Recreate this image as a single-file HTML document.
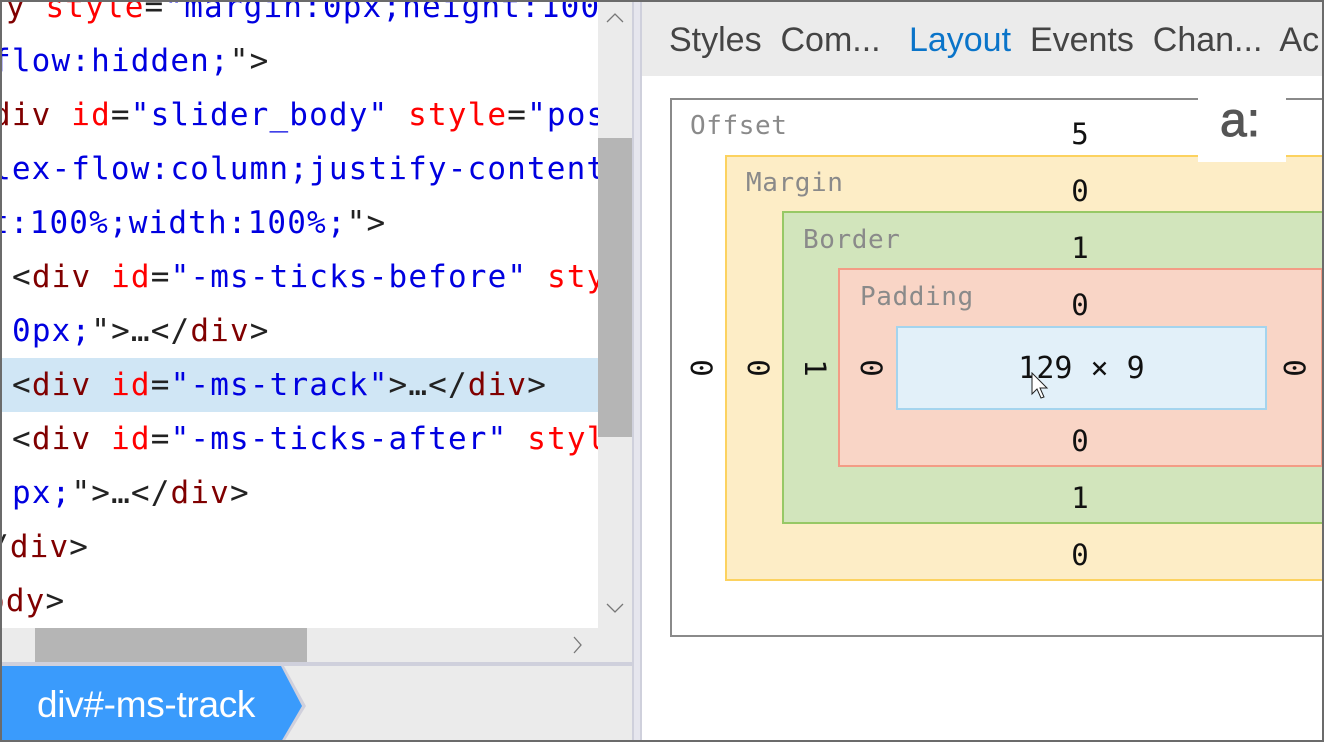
<!DOCTYPE html>
<html><head><meta charset="utf-8"><style>
*{margin:0;padding:0;box-sizing:border-box}
body{width:1324px;height:742px;overflow:hidden;background:#fff;position:relative;font-family:"Liberation Sans",sans-serif}
.abs{position:absolute}
#code{left:0;top:0;width:598px;height:628px;overflow:hidden;background:#fff;font-family:"DejaVu Sans Mono","Liberation Mono",monospace;font-size:31px;letter-spacing:1.15px;white-space:pre}
.ln{position:absolute;left:0;height:54px;line-height:54px}
.t{color:#800000}.a{color:#f00}.v{color:#0000e0}.p{color:#222}
.mono{font-family:"DejaVu Sans Mono","Liberation Mono",monospace}
.lab{position:absolute;color:#8a8a8a;font-size:26px;letter-spacing:0.6px}
.num{position:absolute;font-size:29px;color:#111;width:40px;text-align:center;margin-left:-20px}
.rot{transform:rotate(90deg)}
</style></head><body>
<div id="code" class="abs">
<div class="ln" style="top:-20px;left:-14px"><span class="t">dy</span> <span class="a">style</span><span class="p">=</span><span class="v">"margin:0px;height:100</span></div>
<div class="ln" style="top:34px;left:-8px"><span class="v">flow:hidden;</span><span class="p">"&gt;</span></div>
<div class="ln" style="top:88px;left:-8px"><span class="t">div</span> <span class="a">id</span><span class="p">=</span><span class="v">"slider_body"</span> <span class="a">style</span><span class="p">=</span><span class="v">"pos</span></div>
<div class="ln" style="top:142px;left:-8px"><span class="v">lex-flow:column;justify-content</span></div>
<div class="ln" style="top:196px;left:-10px"><span class="v">t:100%;width:100%;</span><span class="p">"&gt;</span></div>
<div class="ln" style="top:250px;left:12px"><span class="p">&lt;</span><span class="t">div</span> <span class="a">id</span><span class="p">=</span><span class="v">"-ms-ticks-before"</span> <span class="a">sty</span></div>
<div class="ln" style="top:304px;left:12px"><span class="v">0px;</span><span class="p">"&gt;…&lt;/</span><span class="t">div</span><span class="p">&gt;</span></div>
<div class="ln" style="top:358px;left:0;width:598px;background:#d0e6f5"></div>
<div class="ln" style="top:358px;left:12px"><span class="p">&lt;</span><span class="t">div</span> <span class="a">id</span><span class="p">=</span><span class="v">"-ms-track"</span><span class="p">&gt;…&lt;/</span><span class="t">div</span><span class="p">&gt;</span></div>
<div class="ln" style="top:412px;left:12px"><span class="p">&lt;</span><span class="t">div</span> <span class="a">id</span><span class="p">=</span><span class="v">"-ms-ticks-after"</span> <span class="a">styl</span></div>
<div class="ln" style="top:466px;left:12px"><span class="v">px;</span><span class="p">"&gt;…&lt;/</span><span class="t">div</span><span class="p">&gt;</span></div>
<div class="ln" style="top:520px;left:-10px"><span class="p">/</span><span class="t">div</span><span class="p">&gt;</span></div>
<div class="ln" style="top:574px;left:-14px"><span class="t">ody</span><span class="p">&gt;</span></div>
</div>
<div class="abs" style="left:598px;top:0;width:34px;height:628px;background:#ebebeb"></div>
<div class="abs" style="left:598px;top:138px;width:34px;height:299px;background:#b5b5b5"></div>
<svg class="abs" style="left:598px;top:0" width="34" height="628"><path d="M9 22 L17 14 L25 22" fill="none" stroke="#777" stroke-width="1.3"/><path d="M9 604 L17 612 L25 604" fill="none" stroke="#777" stroke-width="1.3"/></svg>
<div class="abs" style="left:0;top:628px;width:632px;height:34px;background:#ebebeb"></div>
<div class="abs" style="left:35px;top:628px;width:272px;height:34px;background:#b5b5b5"></div>
<svg class="abs" style="left:560px;top:628px" width="30" height="34"><path d="M14 9 L21 17 L14 25" fill="none" stroke="#777" stroke-width="1.3"/></svg>
<div class="abs" style="left:0;top:662px;width:642px;height:4px;background:#cfd0dc"></div>
<div class="abs" style="left:632px;top:0;width:10px;height:742px;background:#cfd0dc"></div>
<div class="abs" style="left:634px;top:0;width:6px;height:742px;background:#e6e6ee"></div>
<div class="abs" style="left:0;top:666px;width:632px;height:76px;background:#ebebeb"></div>
<svg class="abs" style="left:0;top:666px" width="310" height="76"><polygon points="0,0 284,0 306,40 284,76 0,76" fill="#d0d0dc"/><polygon points="0,0 281,0 302,40 281,76 0,76" fill="#3a9bfc"/></svg>
<div class="abs" style="left:37px;top:682px;color:#fff;font-size:37px;line-height:46px;letter-spacing:-0.3px">div#-ms-track</div>
<div class="abs" style="left:642px;top:0;width:682px;height:76px;background:#ebebeb"></div>
<div class="abs" style="left:669px;top:17px;font-size:34px;line-height:46px;color:#444;white-space:nowrap">Styles&nbsp; Com...&nbsp;&nbsp; <span style="color:#0a74c9">Layout</span>&nbsp; Events&nbsp; Chan...&nbsp; Ac</div>
<div class="abs" style="left:670px;top:98px;width:700px;height:539px;border:2px solid #8a8a8a"></div>
<div class="abs" style="left:725px;top:155px;width:700px;height:426px;background:#fdedc6;border:2px solid #fcd25f"></div>
<div class="abs" style="left:782px;top:211px;width:700px;height:313px;background:#d2e5bc;border:2px solid #97c865"></div>
<div class="abs" style="left:838px;top:268px;width:485px;height:199px;background:#f9d5c6;border:2px solid #f39c85"></div>
<div class="abs" style="left:896px;top:326px;width:371px;height:84px;background:#e2f0f9;border:2px solid #a4d4ee"></div>
<div class="abs" style="left:1198px;top:76px;width:88px;height:86px;background:#fff"></div>
<div class="abs" style="left:1220px;top:96px;font-size:48px;color:#555;line-height:50px;-webkit-text-stroke:1px #555">a:</div>
<div class="mono">
<div class="lab" style="left:690px;top:111px">Offset</div>
<div class="lab" style="left:746px;top:168px">Margin</div>
<div class="lab" style="left:803px;top:225px">Border</div>
<div class="lab" style="left:860px;top:282px">Padding</div>
<div class="num" style="left:1080px;top:117px">5</div>
<div class="num" style="left:1080px;top:174px">0</div>
<div class="num" style="left:1080px;top:231px">1</div>
<div class="num" style="left:1080px;top:288px">0</div>
<div class="num" style="left:1080px;top:424px">0</div>
<div class="num" style="left:1080px;top:481px">1</div>
<div class="num" style="left:1080px;top:538px">0</div>
<div class="num rot" style="left:701px;top:351px">0</div>
<div class="num rot" style="left:758px;top:351px">0</div>
<div class="num rot" style="left:815px;top:351px">1</div>
<div class="num rot" style="left:871px;top:351px">0</div>
<div class="num rot" style="left:1294px;top:351px">0</div>
<div class="abs" style="left:896px;top:351px;width:371px;text-align:center;font-size:30px;color:#111">129 × 9</div>
</div>
<svg class="abs" style="left:1031px;top:372px" width="20" height="30"><path d="M1 1 L1 22 L6 17 L10 26 L13 25 L9 16 L16 16 Z" fill="#fff" stroke="#222" stroke-width="1"/></svg>
<div class="abs" style="left:0;top:0;width:1324px;height:742px;border:2px solid #6b6b6b"></div>
</body></html>
